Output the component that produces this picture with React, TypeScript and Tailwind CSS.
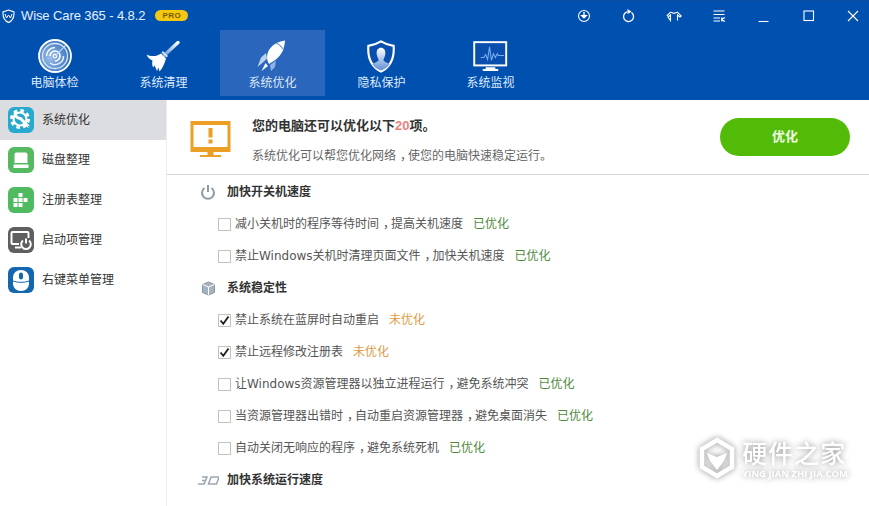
import React from "react";

function Radar() {
  return (
    <svg width="34" height="34" viewBox="0 0 34 34" fill="none">
      <defs>
        <radialGradient id="rg" cx="0.35" cy="0.55" r="0.8">
          <stop offset="0" stopColor="#9cbfe8" />
          <stop offset="1" stopColor="#1a5db4" />
        </radialGradient>
      </defs>
      <circle cx="17" cy="17" r="16" fill="url(#rg)" stroke="#fff" strokeWidth="1.8" />
      <circle cx="17" cy="17" r="12.5" stroke="#d7e6f8" strokeWidth="1.3" />
      <path d="M8.500 17a8.500 8.500 0 0 1 8.500-8.500" stroke="#fff" strokeWidth="1.4" />
      <path d="M25.500 17a8.500 8.500 0 0 1-13.500 7" stroke="#e6f0fb" strokeWidth="1.5" />
      <path d="M12 17a5 5 0 1 1 5 5" stroke="#fff" strokeWidth="1.6" />
      <circle cx="17" cy="17" r="1.800" stroke="#fff" strokeWidth="1.2" />
      <path d="M17 17L28 6" stroke="#bcd6f3" strokeWidth="1.1" />
    </svg>
  );
}

function Broom() {
  return (
    <svg width="35" height="32" viewBox="0 0 35 32">
      <defs>
        <linearGradient id="br" x1="0" y1="1" x2="1" y2="0">
          <stop offset="0" stopColor="#5f94d8" />
          <stop offset="1" stopColor="#fff" />
        </linearGradient>
      </defs>
      <path d="M18 15.500L32 2.500" stroke="url(#br)" strokeWidth="3.400" strokeLinecap="round" />
      <path d="M.5 14.500C5 17 11 16.500 15 13.500L20 18.500C18.500 24 16 29 13.500 31.500L12.500 27.500L11 31L8.500 25.500L7 27.500C6 24.500 6 22.500 6.500 20.500C4 19.500 1.500 17.500.5 14.500Z" fill="#fff" />
      <path d="M15.500 12.500l1.500-1.500 5 5-1.500 1.500z" fill="#cfe0f6" />
    </svg>
  );
}

function Rocket() {
  return (
    <svg className="-ml-[3px]" width="29" height="32" viewBox="0 0 29 32">
      <path d="M28 .5C21 1.500 14 5 11 12C9.500 16.500 10 19.500 11 22L12 24L17.500 20.500C22 17 26 12.500 27 7C27.500 4.500 28 2.500 28 .5Z" fill="#fff" />
      <path d="M19.500 3C22.500 4.500 24.500 6.500 26.500 9.500" stroke="#6d9edb" strokeWidth="1.300" fill="none" />
      <path d="M9 13L4 17.500L.5 27L7 21.500L10 18.500Z" fill="#b9d2f1" />
      <path d="M19 20.500L18 27L14 31L13 25Z" fill="#8db4e6" />
      <path d="M8.500 23L4.500 31L11 26Z" fill="#fff" />
    </svg>
  );
}

function ShieldUser() {
  return (
    <svg className="-ml-[2px]" width="30" height="33" viewBox="0 0 30 34">
      <defs>
        <linearGradient id="sh" x1="0" y1="0" x2="0" y2="1">
          <stop offset="0" stopColor="#fff" />
          <stop offset="1" stopColor="#5f8fd6" />
        </linearGradient>
      </defs>
      <path d="M15 1.500C19 4 23 5.500 28 6C29 18 26 27 15 32.500C4 27 1 18 2 6C7 5.500 11 4 15 1.500Z" fill="#0a4fae" stroke="#fff" strokeWidth="2.200" />
      <path d="M15 8c3 0 4.500 2.500 4.500 5.500S18 19 17.500 20.500c.5 2 4.500 2.500 6.500 4.500-2 3-5 5-9 6.500-4-1.500-7-3.500-9-6.500 2-2 6-2.500 6.500-4.500C12 19 10.500 16.500 10.500 13.500S12 8 15 8Z" fill="url(#sh)" />
    </svg>
  );
}

function Monitor() {
  return (
    <svg width="35" height="31" viewBox="0 0 36 32" fill="none">
      <rect x="1.200" y="1.200" width="33" height="24" fill="#0a4fae" stroke="#fff" strokeWidth="2" />
      <path d="M8 17h3l2-3 2 5 2-13 2 14 2-7 2 4 2-4 1 2h6" stroke="#77aeee" strokeWidth="1.100" />
      <path d="M13 27h10v2H13zM10 29h16v2H10z" fill="#fff" />
    </svg>
  );
}

function Stroke({ children }: { children: React.ReactNode }) {
  return (
    <svg width="16" height="16" viewBox="0 0 16 16" fill="none" stroke="#fff" strokeWidth="1.100">
      {children}
    </svg>
  );
}

function WindowControls() {
  return (
    <div className="-mr-[6px] flex items-center text-white">
      <div className="flex w-[45px] justify-center">
        <Stroke>
          <circle cx="8" cy="8" r="5.500" />
          <path d="M8 4v5" strokeWidth="1.400" />
          <path d="M5.500 7.500L8 10l2.500-2.500z" fill="#fff" />
        </Stroke>
      </div>
      <div className="flex w-[45px] justify-center">
        <Stroke>
          <path d="M10.500 4.500A5 5 0 1 1 6 3.800" strokeWidth="1.300" />
          <path d="M6.500 1l4 2.800-4 2.200z" fill="#fff" stroke="none" />
        </Stroke>
      </div>
      <div className="flex w-[45px] justify-center">
        <Stroke>
          <path d="M.8 8L4.500 4.200c1.500 0 2 1 3.500 1s2-1 3.500-1L15.200 8l-1.200 1-2.500-2v5.500M4.500 12.500V7L2 9z" />
        </Stroke>
      </div>
      <div className="flex w-[45px] justify-center">
        <Stroke>
          <path d="M2.500 3h11M2.500 6.500h11M2.500 10h6.500M2.500 13h6.500" />
          <path d="M10.800 9.500v4M10.800 11.500l3-2M10.800 11.500l3 2" strokeWidth="1.300" />
        </Stroke>
      </div>
      <div className="flex w-[45px] justify-center">
        <Stroke>
          <path d="M2.500 13.500h10" />
        </Stroke>
      </div>
      <div className="flex w-[45px] justify-center">
        <Stroke>
          <rect x="3" y="3" width="9.500" height="9.500" />
        </Stroke>
      </div>
      <div className="flex w-[44px] justify-center">
        <Stroke>
          <path d="M3 3l10 10M13 3L3 13" />
        </Stroke>
      </div>
    </div>
  );
}

const tabs = [
  { label: "电脑体检", icon: <Radar /> },
  { label: "系统清理", icon: <Broom /> },
  { label: "系统优化", icon: <Rocket />, active: true },
  { label: "隐私保护", icon: <ShieldUser /> },
  { label: "系统监视", icon: <Monitor /> },
];

const sideItems = [
  {
    label: "系统优化",
    bg: "bg-[#29a9cd]",
    active: true,
    icon: (
      <svg width="24" height="24" viewBox="0 0 24 24" fill="none">
        <circle cx="11" cy="11" r="8.500" stroke="#fff" strokeWidth="3" strokeDasharray="3.500 3.200" />
        <circle cx="11" cy="11" r="6.500" stroke="#fff" strokeWidth="2.200" />
        <path d="M6 5.500c0 3 3 5 5.500 5L19 18" stroke="#fff" strokeWidth="3" strokeLinecap="round" />
        <path d="M19 18l1.500 1.500" stroke="#29a9cd" strokeWidth="1" />
      </svg>
    ),
  },
  {
    label: "磁盘整理",
    bg: "bg-[#55b962]",
    icon: (
      <svg width="18" height="17" viewBox="0 0 18 17">
        <path d="M2.500 2.500A2 2 0 0 1 4.500.5h9a2 2 0 0 1 2 2V11h-13z" fill="#fff" />
        <rect x="1.500" y="12.500" width="15" height="3.500" rx="0.500" fill="#fff" />
      </svg>
    ),
  },
  {
    label: "注册表整理",
    bg: "bg-[#4fba60]",
    icon: (
      <svg width="16" height="16" viewBox="0 0 16 16" fill="#fff">
        <rect x="5.500" y="1" width="4" height="4" />
        <rect x="0.500" y="6" width="4" height="4" />
        <rect x="5.500" y="6" width="4" height="4" />
        <rect x="10.500" y="6" width="4" height="4" />
        <rect x="0.500" y="11" width="4" height="4" />
        <rect x="5.500" y="11" width="4" height="4" />
      </svg>
    ),
  },
  {
    label: "启动项管理",
    bg: "bg-[#5f5f5f]",
    icon: (
      <svg width="24" height="22" viewBox="0 0 24 22" fill="none" stroke="#fff">
        <path d="M10 15H3.500a1 1 0 0 1-1-1V4a1 1 0 0 1 1-1h15a1 1 0 0 1 1 1v5" strokeWidth="2" />
        <path d="M6 18.500h6" strokeWidth="2" />
        <path d="M14 11.500a4.800 4.800 0 1 0 6 0" strokeWidth="2" />
        <path d="M17 9.500v5" strokeWidth="2" />
      </svg>
    ),
  },
  {
    label: "右键菜单管理",
    bg: "bg-[#1467ae]",
    icon: (
      <svg width="18" height="23" viewBox="0 0 18 23">
        <path d="M9 1c4.500 0 8 3 8 7.500v6c0 4.500-3.500 7.500-8 7.500s-8-3-8-7.500v-6C1 4 4.500 1 9 1Z" fill="#fff" />
        <path d="M1 12c4 1.800 12 1.800 16 0" stroke="#1467ae" strokeWidth="1" fill="none" />
        <rect x="7" y="3.500" width="4" height="7" rx="2" fill="#1467ae" />
      </svg>
    ),
  },
];

function SideItem({ label, bg, icon, active }: { label: string; bg: string; icon: React.ReactNode; active?: boolean }) {
  return (
    <div className={`flex h-10 items-center gap-[8px] pl-2 ${active ? "bg-[#dcdde0]" : ""}`}>
      <div className={`flex h-[26px] w-[26px] items-center justify-center rounded-[6px] ${bg}`}>{icon}</div>
      <span className="text-[12px] text-[#333]">{label}</span>
    </div>
  );
}

function Spaced({ text }: { text: string }) {
  const parts = text.split("，");
  return (
    <>
      {parts.map((p, i) => (
        <React.Fragment key={i}>
          {p}
          {i < parts.length - 1 && <span className="pl-[4px] tracking-[-4px]">，</span>}
        </React.Fragment>
      ))}
    </>
  );
}

function Row({ text, done, checked }: { text: string; done?: boolean; checked?: boolean }) {
  return (
    <div className="flex h-8 items-center pl-[51px]">
      <div className="flex h-[13px] w-[13px] items-center justify-center border border-[#c2c2c2] bg-white">
        {checked && (
          <svg width="11" height="11" viewBox="0 0 11 11" fill="none">
            <path d="M1.500 5.500L4.300 8.800 9.500 1.500" stroke="#222" strokeWidth="1.900" />
          </svg>
        )}
      </div>
      <span className="ml-[4px] text-[12px] text-[#555] [font-family:'DejaVu_Sans','Noto_Sans_CJK_SC',sans-serif]">
        <Spaced text={text} />
      </span>
      <span className={`ml-[10px] text-[12px] ${done ? "text-[#4f8a3c]" : "text-[#de9a3f]"}`}>{done ? "已优化" : "未优化"}</span>
    </div>
  );
}

function SectionHead({ icon, text }: { icon: React.ReactNode; text: string }) {
  return (
    <div className="flex h-8 items-center pl-[28px]">
      <div className="flex w-[26px] justify-center">{icon}</div>
      <span className="ml-[6px] text-[12px] font-bold text-[#333]">{text}</span>
    </div>
  );
}

function Watermark() {
  return (
    <div className="pointer-events-none absolute bottom-[27px] right-[21px] flex items-center gap-[7px] text-white drop-shadow-[0_0_3px_rgba(0,0,0,0.45)]">
      <svg width="36" height="42" viewBox="0 0 36 42" fill="none">
        <path d="M18 3l15 9v18L18 39 3 30V12z" stroke="#fff" strokeWidth="4.500" />
        <path d="M8 16l10 4 10-4-3 8-7 9-7-9z" fill="#fff" />
      </svg>
      <div className="flex flex-col pt-[3px]">
        <span className="text-[25px] font-medium leading-[27px] tracking-[1px]">硬件之家</span>
        <span className="text-[9.500px] font-bold leading-[11px] [font-family:'Open_Sans',sans-serif]">YING JIAN ZHI JIA.COM</span>
      </div>
    </div>
  );
}

export default function App() {
  return (
    <div className="relative flex h-[506px] w-[869px] flex-col overflow-hidden bg-white [font-family:'Liberation_Sans','Noto_Sans_CJK_SC',sans-serif]">
      <header className="flex h-[100px] flex-col border-t border-[#0b4a9c] bg-[#0050b0] text-white">
        <div className="flex h-[29px] items-center justify-between">
          <div className="flex items-center">
            <svg className="ml-[2px]" width="13" height="14" viewBox="0 0 13 14" fill="none" stroke="#fff">
              <path d="M6.500 1l5.500 2c.3 5-1 8.500-5.500 10.500C2 11.500.7 8 1 3z" strokeWidth="1.100" />
              <path d="M3 5l1.500 4L6.500 6l2 3L10 5" strokeWidth="1" />
            </svg>
            <span className="ml-[6px] text-[13px] tracking-[-0.1px] text-[#e8f0fb]">Wise Care 365 - 4.8.2</span>
            <span className="ml-[10px] flex h-[11px] w-[33px] items-center justify-center rounded-full bg-[#f2c811] text-[8px] font-bold tracking-[0.5px] text-[#7c5a00]">
              PRO
            </span>
          </div>
          <WindowControls />
        </div>
        <nav className="flex h-[66px]">
          {tabs.map((t) => (
            <div key={t.label} className="flex h-[66px] w-[109px] justify-center">
              <div className={`flex h-[66px] w-[105px] flex-col items-center justify-end ${t.active ? "bg-[#2a66bb]" : ""}`}>
                <div className="flex h-[38px] items-center">{t.icon}</div>
                <span className="mb-[5px] text-[12px] leading-[16px] text-[#dfe9f7]">{t.label}</span>
              </div>
            </div>
          ))}
        </nav>
      </header>
      <div className="flex min-h-0 flex-1">
        <aside className="w-[167px] shrink-0 border-r border-[#ececec] bg-white">
          {sideItems.map((s) => (
            <SideItem key={s.label} {...s} />
          ))}
        </aside>
        <main className="min-w-0 flex-1">
          <div className="mb-px flex h-[75px] items-center border-b border-[#d8d8d8] pl-[23px] pr-[19px]">
            <svg className="mt-[3px]" width="41" height="36" viewBox="0 0 41 36">
              <rect x="0.500" y="0" width="40" height="31" fill="#ec9f25" />
              <rect x="3.500" y="4" width="34" height="22" fill="#fff" />
              <rect x="18.500" y="7" width="4" height="9.500" fill="#ec9f25" />
              <rect x="18.500" y="18.500" width="4" height="4" fill="#ec9f25" />
              <rect x="17.500" y="31" width="6" height="3" fill="#ec9f25" />
              <rect x="10" y="34" width="21" height="2" fill="#ec9f25" />
            </svg>
            <div className="ml-[21px] flex flex-col">
              <div className="mt-[7px] text-[13px] font-bold leading-[20px] text-[#333]">
                您的电脑还可以优化以下<span className="text-[#e8827f]">20</span>项。
              </div>
              <div className="mt-[11px] text-[12px] leading-[18px] text-[#666]">
                <Spaced text="系统优化可以帮您优化网络，使您的电脑快速稳定运行。" />
              </div>
            </div>
            <button className="ml-auto h-[38px] w-[130px] rounded-full bg-[#52bb08] text-[13px] font-bold text-[#f2ffe6]">优化</button>
          </div>
          <div>
            <SectionHead
              text="加快开关机速度"
              icon={
                <svg width="16" height="16" viewBox="0 0 16 16" fill="none" stroke="#8e9aa6" strokeWidth="2">
                  <path d="M4.500 4a6 6 0 1 0 7 0" />
                  <path d="M8 1v7" />
                </svg>
              }
            />
            <Row text="减小关机时的程序等待时间，提高关机速度" done />
            <Row text="禁止Windows关机时清理页面文件，加快关机速度" done />
            <SectionHead
              text="系统稳定性"
              icon={
                <svg width="15" height="15" viewBox="0 0 15 15" fill="#a6b2bd" stroke="#8a97a3">
                  <path d="M7.500 1l6 2.500v8L7.500 14l-6-2.500v-8z" />
                  <path d="M1.500 3.500l6 2.500 6-2.500M7.500 6v8" stroke="#fff" fill="none" />
                </svg>
              }
            />
            <Row text="禁止系统在蓝屏时自动重启" checked />
            <Row text="禁止远程修改注册表" checked />
            <Row text="让Windows资源管理器以独立进程运行，避免系统冲突" done />
            <Row text="当资源管理器出错时，自动重启资源管理器，避免桌面消失" done />
            <Row text="自动关闭无响应的程序，避免系统死机" done />
            <SectionHead
              text="加快系统运行速度"
              icon={
                <svg width="21" height="9" viewBox="0 0 21 9" fill="none" stroke="#9aa5b0" strokeWidth="1.500">
                  <path d="M4 1h5L7.500 4.500H4M7.500 4.500L6 8H0M13 1h8l-2.500 7H10.500z" />
                </svg>
              }
            />
          </div>
        </main>
      </div>
      <Watermark />
    </div>
  );
}
